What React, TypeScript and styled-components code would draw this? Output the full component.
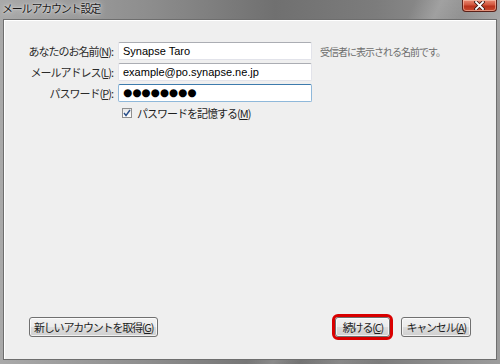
import React from 'react';
import styled, { createGlobalStyle } from 'styled-components';

const GlobalStyle = createGlobalStyle`
  html, body {
    margin: 0;
    padding: 0;
    background: #ffffff;
  }
  * {
    box-sizing: border-box;
  }
`;

const Window = styled.div`
  width: 500px;
  height: 364px;
  display: flex;
  flex-direction: column;
  font-family: "Noto Sans CJK JP", "Liberation Sans", sans-serif;
  font-size: 11px;
  letter-spacing: -1px;
  color: #1e1e1e;
  background:
    linear-gradient(115deg, transparent 0 62%, rgba(255,255,255,0.18) 66%, transparent 70%, rgba(255,255,255,0.12) 76%, transparent 82%),
    linear-gradient(90deg, #a9a9a9 0%, #8d8d8d 30%, #707070 55%, #7c7c7c 75%, #9c9c9c 100%);
`;

const TitleBar = styled.div`
  height: 19px;
  display: flex;
  align-items: flex-start;
  justify-content: space-between;
  padding: 0 3px 0 2px;
`;

const Title = styled.span`
  line-height: 16px;
  font-size: 11px;
  letter-spacing: -1.2px;
  color: #1a1a1a;
  text-shadow: 0 0 6px rgba(255, 255, 255, 0.9), 0 0 2px rgba(255, 255, 255, 0.8);
`;

const CloseButton = styled.div`
  width: 35px;
  height: 12px;
  border: 1px solid #5a2018;
  border-top: none;
  border-radius: 0 0 4px 4px;
  background: linear-gradient(#e98a73 0%, #d1553c 45%, #b8321c 55%, #c94a2e 100%);
  box-shadow: inset 0 0 0 1px rgba(255, 220, 200, 0.5);
  display: flex;
  align-items: center;
  justify-content: center;

  svg {
    display: block;
  }
`;

const Panel = styled.div`
  flex: 1;
  margin: 0 3px 4px 3px;
  background: #efefef;
  border: 1px solid #6e6e6e;
  box-shadow: inset 1px 1px 0 #ffffff;
  display: flex;
  flex-direction: column;
  justify-content: space-between;
  padding: 22px 25px 22px 25px;
`;

const Form = styled.div`
  display: grid;
  grid-template-columns: 109px 194px auto;
  column-gap: 5px;
  row-gap: 3px;
  align-items: center;
  margin-left: -25px;
`;

const Label = styled.label`
  justify-self: end;
  white-space: nowrap;
  line-height: 18px;
  color: #2a2a2a;
`;

const Underline = styled.span`
  text-decoration: underline;
`;

const Input = styled.div<{ $focused?: boolean }>`
  height: 18px;
  background: #ffffff;
  border: 1px solid ${p => (p.$focused ? '#8fb8da' : '#e2e3ea')};
  border-top-color: ${p => (p.$focused ? '#3d7bad' : '#abadb3')};
  border-radius: 2px;
  padding: 0 4px;
  line-height: 16px;
  font-size: 11px;
  letter-spacing: 0;
  font-family: "Liberation Sans", "Noto Sans CJK JP", sans-serif;
  color: #000;
  white-space: nowrap;
  overflow: hidden;
`;

const Dots = styled.span`
  font-size: 10.5px;
  letter-spacing: 0;
  font-family: "DejaVu Sans", sans-serif;
  position: relative;
  top: -1px;
`;

const Hint = styled.span`
  color: #6d6d6d;
  font-size: 10px;
  letter-spacing: -1px;
  white-space: nowrap;
  padding-left: 3px;
`;

const CheckRow = styled.div`
  grid-column: 2 / 4;
  display: flex;
  align-items: center;
  gap: 5px;
  margin-top: 1px;
  padding-left: 4px;
  line-height: 14px;
`;

const CheckBox = styled.span`
  width: 10px;
  height: 10px;
  border: 1px solid #8f8f8f;
  background: linear-gradient(#e8e8e8, #ffffff);
  display: flex;
  align-items: center;
  justify-content: center;
`;

const Footer = styled.div`
  display: flex;
  align-items: center;
  gap: 8px;
`;

const Spacer = styled.div`
  flex: 1;
`;

const Button = styled.button<{ $highlight?: boolean }>`
  height: 20px;
  min-width: 55px;
  padding: 0 4px;
  font-family: "Noto Sans CJK JP", sans-serif;
  font-size: 11px;
  letter-spacing: -1.2px;
  color: #1e1e1e;
  border: 1px solid #707070;
  border-radius: 3px;
  background: linear-gradient(#f2f2f2 0%, #ebebeb 50%, #dddddd 51%, #cfcfcf 100%);
  box-shadow: inset 0 0 0 1px rgba(255, 255, 255, 0.7);
  white-space: nowrap;
  outline: ${p => (p.$highlight ? '3px solid #d90000' : 'none')};
  outline-offset: 0;
  margin-right: ${p => (p.$highlight ? '3px' : '0')};
`;

const App: React.FC = () => {
  return (
    <>
      <GlobalStyle />
      <Window>
        <TitleBar>
          <Title>メールアカウント設定</Title>
          <CloseButton>
            <svg width="11" height="9" viewBox="0 0 11 9">
              <path d="M2 1 L9 8 M9 1 L2 8" stroke="#3a1a14" strokeWidth="3.4" strokeLinecap="square" />
              <path d="M2 1 L9 8 M9 1 L2 8" stroke="#ffffff" strokeWidth="1.8" strokeLinecap="square" />
            </svg>
          </CloseButton>
        </TitleBar>
        <Panel>
          <Form>
            <Label>あなたのお名前(<Underline>N</Underline>):</Label>
            <Input>Synapse Taro</Input>
            <Hint>受信者に表示される名前です。</Hint>

            <Label>メールアドレス(<Underline>L</Underline>):</Label>
            <Input>example@po.synapse.ne.jp</Input>
            <span />

            <Label>パスワード(<Underline>P</Underline>):</Label>
            <Input $focused>
              <Dots>●●●●●●●●</Dots>
            </Input>
            <span />

            <CheckRow>
              <CheckBox>
                <svg width="8" height="8" viewBox="0 0 8 8">
                  <path d="M1 4 L3 6.5 L7 1" fill="none" stroke="#2a4f8a" strokeWidth="1.4" />
                </svg>
              </CheckBox>
              <span>パスワードを記憶する(<Underline>M</Underline>)</span>
            </CheckRow>
          </Form>
          <Footer>
            <Button>新しいアカウントを取得(<Underline>G</Underline>)</Button>
            <Spacer />
            <Button $highlight>続ける(<Underline>C</Underline>)</Button>
            <Button>キャンセル(<Underline>A</Underline>)</Button>
          </Footer>
        </Panel>
      </Window>
    </>
  );
};

export default App;
